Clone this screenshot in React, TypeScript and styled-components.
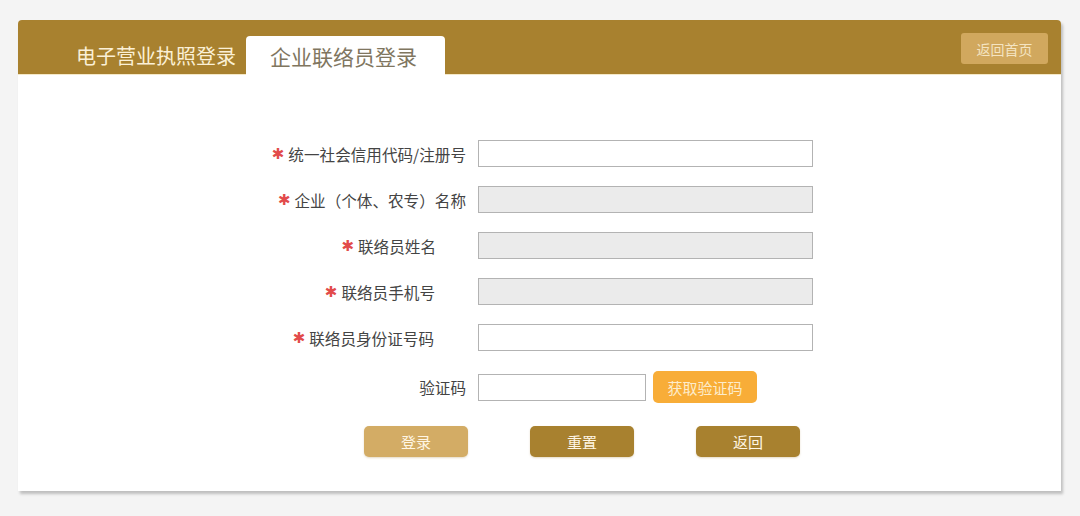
import React from 'react'
import styled, { createGlobalStyle } from 'styled-components'

const GlobalStyle = createGlobalStyle`
	html, body {
		margin: 0;
		padding: 0;
		background: #f4f4f4;
		font-family: 'Noto Sans CJK SC', 'Noto Sans', sans-serif;
	}
`

const Page = styled.div`
	padding: 20px 19px 25px 18px;
`

const Card = styled.div`
	background: #fff;
	border-radius: 4px 4px 0 0;
	box-shadow: 2px 3px 3px rgba(0, 0, 0, 0.22);
`

const Header = styled.div`
	height: 55px;
	background: #a8812f;
	border-radius: 4px 4px 0 0;
	display: flex;
	align-items: flex-end;
	padding-left: 58px;
	padding-right: 13px;
	border-bottom: 1px solid #f5e9c8;
	box-sizing: border-box;
`

const Tab = styled.div<{ $active?: boolean }>`
	height: 39px;
	display: flex;
	align-items: center;
	padding: ${p => (p.$active ? '0 28px 0 24px' : '0 10px 0 0')};
	font-size: ${p => (p.$active ? 21 : 20)}px;
	color: ${p => (p.$active ? '#80765f' : '#fbf0d6')};
	background: ${p => (p.$active ? '#fff' : 'transparent')};
	border-radius: 4px 4px 0 0;
	margin-bottom: -1px;
`

const HomeButton = styled.button`
	margin-left: auto;
	align-self: flex-start;
	margin-top: 13px;
	width: 87px;
	height: 31px;
	border: none;
	border-radius: 3px;
	background: #d1a85e;
	color: #f4e4c2;
	font-family: inherit;
	font-size: 14px;
	padding: 0;
`

const Form = styled.div`
	display: flex;
	flex-direction: column;
	gap: 19px;
	padding: 65px 0 34px;
`

const Row = styled.div<{ $top?: number }>`
	display: grid;
	grid-template-columns: 448px 1fr;
	column-gap: 12px;
	align-items: center;
	margin-top: ${p => p.$top ?? 0}px;
`

const Label = styled.label<{ $pad?: number }>`
	display: flex;
	justify-content: flex-end;
	align-items: center;
	gap: 4px;
	padding-right: ${p => p.$pad ?? 0}px;
	font-size: 15.6px;
	color: #444;
	white-space: nowrap;
`

const Star = styled.span`
	color: #e24b4b;
	font-family: 'DejaVu Sans', sans-serif;
	font-size: 15px;
	line-height: 1;
	position: relative;
	top: 1px;
`

const Input = styled.input<{ $short?: boolean }>`
	box-sizing: border-box;
	width: ${p => (p.$short ? 168 : 335)}px;
	height: 27px;
	border: 1px solid #b3b3b3;
	background: #fff;
	margin: 0;
	padding: 0 6px;
	font-family: inherit;
	&:disabled {
		background: #ebebeb;
	}
`

const CodeWrap = styled.div`
	display: flex;
	align-items: center;
	gap: 7px;
`

const CodeButton = styled.button`
	width: 104px;
	height: 32px;
	border: none;
	border-radius: 5px;
	background: #f8ad38;
	color: #fdeccb;
	font-family: inherit;
	font-size: 15px;
	padding: 0;
`

const Actions = styled.div`
	display: flex;
	gap: 62px;
	padding-left: 346px;
	margin-top: 4px;
`

const ActionButton = styled.button<{ $light?: boolean }>`
	width: 104px;
	height: 31px;
	border: none;
	border-radius: 5px;
	background: ${p => (p.$light ? '#d3ac65' : '#a8812f')};
	color: #fff6e4;
	font-family: inherit;
	font-size: 15px;
	padding: 0;
	box-shadow: 0 1px 2px rgba(150, 110, 30, 0.25);
`

const fields = [
	{ label: '统一社会信用代码/注册号', pad: 0, disabled: false },
	{ label: '企业（个体、农专）名称', pad: 0, disabled: true },
	{ label: '联络员姓名', pad: 30, disabled: true },
	{ label: '联络员手机号', pad: 31, disabled: true },
	{ label: '联络员身份证号码', pad: 32, disabled: false },
]

export default function App() {
	return (
		<Page>
			<GlobalStyle />
			<Card>
				<Header>
					<Tab>电子营业执照登录</Tab>
					<Tab $active>企业联络员登录</Tab>
					<HomeButton>返回首页</HomeButton>
				</Header>
				<Form>
					{fields.map(f => (
						<Row key={f.label}>
							<Label $pad={f.pad}>
								<Star>✱</Star>
								{f.label}
							</Label>
							<div>
								<Input disabled={f.disabled} />
							</div>
						</Row>
					))}
					<Row $top={1}>
						<Label>验证码</Label>
						<CodeWrap>
							<Input $short />
							<CodeButton>获取验证码</CodeButton>
						</CodeWrap>
					</Row>
					<Actions>
						<ActionButton $light>登录</ActionButton>
						<ActionButton>重置</ActionButton>
						<ActionButton>返回</ActionButton>
					</Actions>
				</Form>
			</Card>
		</Page>
	)
}
